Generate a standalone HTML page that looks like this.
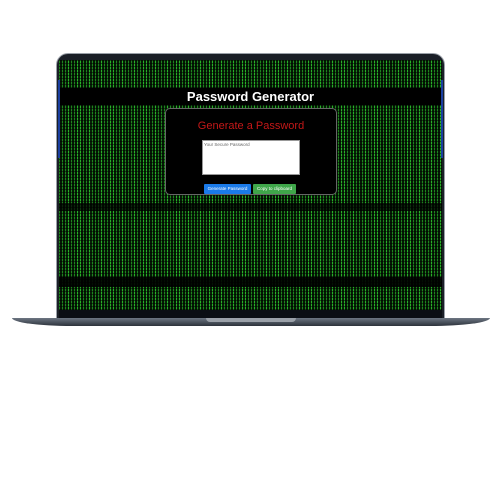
<!DOCTYPE html>
<html><head><style>
body{margin:0;width:500px;height:500px;background:#fff;position:relative;overflow:hidden;font-family:"Liberation Sans",sans-serif}
.frame{position:absolute;left:56px;top:53px;width:389px;height:268px;background:#1b1f27;border-radius:12px 12px 0 0;border:1px solid #9aa0a8;box-sizing:border-box}
.screen{position:absolute;left:59px;top:60px;width:383px;height:250px;background-color:#082808;
background-image:repeating-linear-gradient(0deg,rgba(0,0,0,.5) 0 1px,transparent 1px 3px),repeating-linear-gradient(90deg,rgba(0,0,0,.25) 0 7px,transparent 7px 11px),repeating-linear-gradient(90deg,#28b028 0 1px,#062006 1px 3px);overflow:hidden}
.band{position:absolute;left:0;width:100%;background:#000}
.title{position:absolute;left:0;top:28px;width:100%;height:17px;background:#000;color:#fff;font-size:13px;font-weight:bold;text-align:center;line-height:17px}
.card{position:absolute;left:106px;top:48px;width:172px;height:87px;background:#000;border:1px solid #666;border-radius:5px;box-sizing:border-box}
.card h2{margin:0;position:absolute;top:11px;width:100%;text-align:center;color:#c41818;font-size:11px;font-weight:normal}
.ta{position:absolute;left:36px;top:31px;width:98px;height:35px;background:#fff;border:1px solid #999;font-size:4.5px;color:#666;padding:1px;box-sizing:border-box}
.b{position:absolute;top:75px;height:10px;font-size:4.5px;color:#fff;line-height:10px;text-align:center;border-radius:1px}
.base{position:absolute;left:12px;top:318px;width:478px;height:8px;background:linear-gradient(#6d7683,#2c323b);border-radius:0 0 60px 60px/0 0 8px 8px}
.notch{position:absolute;left:206px;top:318px;width:90px;height:4px;background:#9aa0a8;border-radius:0 0 4px 4px}
</style></head><body>
<div class="frame"></div>
<div class="screen">
<div class="band" style="top:143px;height:8px;opacity:.7"></div>
<div class="band" style="top:217px;height:10px;opacity:.9"></div>
<div class="title">Password Generator</div>
<div class="card"><h2>Generate a Password</h2>
<div class="ta">Your Secure Password</div>
<div class="b" style="left:38px;width:47px;background:#1a7ae8">Generate Password</div>
<div class="b" style="left:87px;width:43px;background:#3fa64a">Copy to clipboard</div>
</div>
</div>
<div style="position:absolute;left:58px;top:80px;width:2px;height:78px;background:#1a3fa0"></div>
<div style="position:absolute;left:441px;top:80px;width:2px;height:78px;background:#1a3fa0"></div>
<div style="position:absolute;left:59px;top:310px;width:383px;height:9px;background:#0b0e14"></div>
<div class="base"></div><div class="notch"></div>
</body></html>
